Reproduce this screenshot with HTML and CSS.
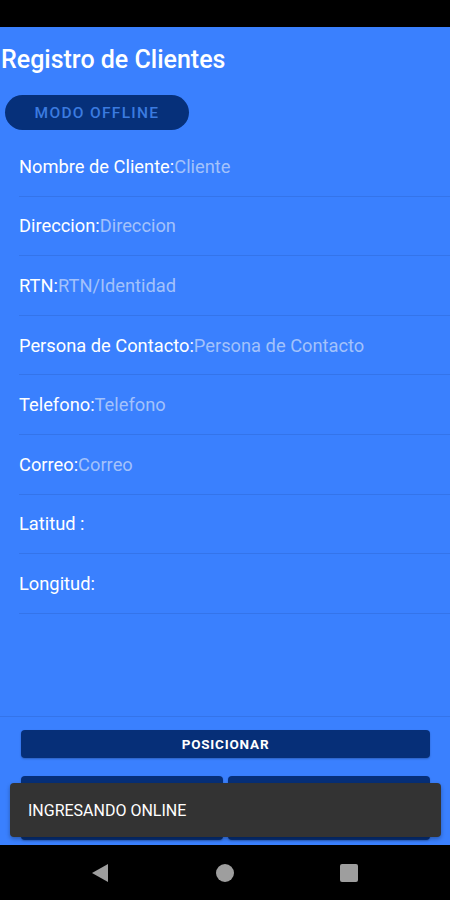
FILE: index.html
```
<!DOCTYPE html>
<html lang="es">
<head>
    <meta charset="UTF-8">
    <meta name="viewport" content="width=device-width, initial-scale=1.0">
    <title>Registro de Clientes</title>
    <link rel="stylesheet" href="styles.css">
</head>
<body>
    <div class="status-bar"></div>
    <main class="screen">
        <h1 class="title">Registro de Clientes</h1>
        <button class="offline-button">MODO OFFLINE</button>

        <ul class="fields">
            <li class="field"><span class="label">Nombre de Cliente:</span><span class="hint">Cliente</span></li>
            <li class="field"><span class="label">Direccion:</span><span class="hint">Direccion</span></li>
            <li class="field"><span class="label">RTN:</span><span class="hint">RTN/Identidad</span></li>
            <li class="field"><span class="label">Persona de Contacto:</span><span class="hint">Persona de Contacto</span></li>
            <li class="field"><span class="label">Telefono:</span><span class="hint">Telefono</span></li>
            <li class="field"><span class="label">Correo:</span><span class="hint">Correo</span></li>
            <li class="field"><span class="label">Latitud :</span></li>
            <li class="field"><span class="label">Longitud:</span></li>
        </ul>

        <div class="actions">
            <button class="action-button wide">POSICIONAR</button>
            <div class="action-row">
                <button class="action-button tall"></button>
                <button class="action-button tall"></button>
            </div>
        </div>

        <!-- snackbar sits over the bottom buttons -->
        <div class="toast">INGRESANDO ONLINE</div>
    </main>
    <nav class="nav-bar">
        <svg class="nav-icon" width="20" height="20" viewBox="0 0 20 20"><path d="M18 1 L18 19 L2 10 Z" fill="#9e9e9e"/></svg>
        <svg class="nav-icon" width="20" height="20" viewBox="0 0 20 20"><circle cx="10" cy="10" r="9" fill="#9e9e9e"/></svg>
        <svg class="nav-icon" width="20" height="20" viewBox="0 0 20 20"><rect x="1" y="1" width="18" height="18" rx="2" fill="#9e9e9e"/></svg>
    </nav>
</body>
</html>
```

FILE: styles.css
```
body {
    margin: 0;
    padding: 0;
    font-family: 'Roboto', 'Noto Sans', sans-serif;
    background-color: #000;
    width: 450px;
    height: 900px;
    overflow: hidden;
}

.status-bar {
    height: 27px;
    background-color: #000;
}

.screen {
    position: relative;
    height: 818px;
    background-color: #3a80fe;
    display: flex;
    flex-direction: column;
}

.title {
    margin: 0;
    padding: 18px 0 0 1px;
    height: 50px;
    box-sizing: border-box;
    font-size: 25px;
    font-weight: 500;
    line-height: 30px;
    color: #fff;
}

.offline-button {
    align-self: flex-start;
    margin: 18px 0 0 5px;
    width: 184px;
    height: 35px;
    border: none;
    border-radius: 18px;
    background-color: #06307a;
    color: #3b7be0;
    font-family: inherit;
    font-size: 15.5px;
    font-weight: 500;
    letter-spacing: 1.3px;
}

.fields {
    list-style-type: none;
    margin: 7px 0 0 19px;
    padding: 0;
}

.field {
    height: 59.6px;
    box-sizing: border-box;
    border-bottom: 1px solid #3474ea;
    display: flex;
    align-items: center;
    font-size: 18.3px;
}

.label {
    color: #fff;
}

.hint {
    color: #a3c2fb;
}

.actions {
    margin-top: auto;
    border-top: 1px solid #3474ea;
    padding: 13px 20px 5px 21px;
    display: flex;
    flex-direction: column;
    gap: 18px;
}

.action-button {
    border: none;
    border-radius: 4px;
    background-color: #062f78;
    color: #fff;
    font-family: inherit;
    box-shadow: 0 1px 2px rgba(0, 0, 0, 0.25);
}

.wide {
    height: 28px;
    font-size: 13.5px;
    font-weight: 700;
    letter-spacing: 0.8px;
}

.action-row {
    display: flex;
    gap: 5px;
}

.tall {
    flex: 1;
    height: 64px;
}

.toast {
    position: absolute;
    left: 10px;
    right: 9px;
    top: 756px;
    height: 54px;
    box-sizing: border-box;
    padding: 0 18px;
    display: flex;
    align-items: center;
    border-radius: 4px;
    background-color: #333;
    color: #fff;
    font-size: 16px;
    box-shadow: 0 2px 4px rgba(0, 0, 0, 0.3);
}

.nav-bar {
    height: 55px;
    background-color: #000;
    display: flex;
    align-items: center;
    justify-content: space-between;
    padding: 0 91px 0 90px;
}
```
